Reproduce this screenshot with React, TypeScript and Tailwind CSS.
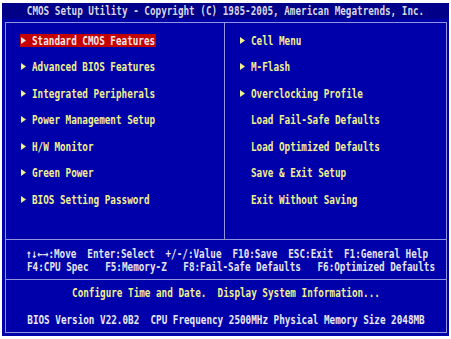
import React from "react";

function Arrow({ light }: { light?: boolean }) {
  return (
    <svg width="5" height="7" viewBox="0 0 5 7" className="block">
      <path d="M0 0L5 3.5L0 7Z" fill={light ? "#f4e8e8" : "#f0f090"} />
    </svg>
  );
}

function Item({ label, arrow, selected }: { label: string; arrow?: boolean; selected?: boolean }) {
  return (
    <div className="h-[26.5px] flex items-center pl-[14px]">
      <div
        className={
          selected
            ? "flex items-center h-[13px] pl-[1px] pr-[1px] bg-[#c40000] text-[#f6e6e6]"
            : "flex items-center h-[13px] pl-[1px] pr-[1px] text-[#f0f090]"
        }
      >
        <span className="w-[11px] flex items-center">{arrow && <Arrow light={selected} />}</span>
        <span className="inline-block scale-y-[1.3] leading-none whitespace-pre">{label}</span>
      </div>
    </div>
  );
}

const left = [
  { label: "Standard CMOS Features", arrow: true, selected: true },
  { label: "Advanced BIOS Features", arrow: true },
  { label: "Integrated Peripherals", arrow: true },
  { label: "Power Management Setup", arrow: true },
  { label: "H/W Monitor", arrow: true },
  { label: "Green Power", arrow: true },
  { label: "BIOS Setting Password", arrow: true },
];

const right = [
  { label: "Cell Menu", arrow: true },
  { label: "M-Flash", arrow: true },
  { label: "Overclocking Profile", arrow: true },
  { label: "Load Fail-Safe Defaults" },
  { label: "Load Optimized Defaults" },
  { label: "Save & Exit Setup" },
  { label: "Exit Without Saving" },
];

const help1 = ["↑↓←→:Move", "Enter:Select", "+/-/:Value", "F10:Save", "ESC:Exit", "F1:General Help"];
const help2 = ["F4:CPU Spec", "F5:Memory-Z", "F8:Fail-Safe Defaults", "F6:Optimized Defaults"];

export default function App() {
  return (
    <div className="w-[451px] h-[339px] bg-white pt-[3px] pl-[2px] pr-[2px] pb-[3px] font-['DejaVu_Sans_Mono',monospace] font-bold text-[9.3px]">
      <div className="h-full flex flex-col bg-[#0000aa]">
        <div className="h-[16px] shrink-0 bg-[#000088] flex items-center justify-center text-[#d8d8e4]">
          <span className="inline-block scale-y-[1.3] leading-none whitespace-pre">
            CMOS Setup Utility - Copyright (C) 1985-2005, American Megatrends, Inc.
          </span>
        </div>
        <div className="flex-1 pt-[3px] pl-[3px] pr-[2px] pb-[3px]">
          <div className="h-full border border-[#9494dc] flex flex-col">
            <div className="h-[217px] shrink-0 border-b border-[#9494dc] flex">
              <div className="w-[219px] shrink-0 border-r border-[#9494dc] pt-[4px]">
                {left.map((it) => (
                  <Item key={it.label} {...it} />
                ))}
              </div>
              <div className="flex-1 pt-[4px]">
                {right.map((it) => (
                  <Item key={it.label} {...it} />
                ))}
              </div>
            </div>
            <div className="h-[40px] shrink-0 border-b border-[#9494dc] pt-[7px] text-[#e4e4ec]">
              <div className="h-[13px] w-[402px] ml-[20px] flex items-center justify-between">
                {help1.map((t) => (
                  <span key={t} className="inline-block scale-y-[1.3] leading-none whitespace-pre">{t}</span>
                ))}
              </div>
              <div className="h-[13px] w-[408px] ml-[21px] flex items-center justify-between">
                {help2.map((t) => (
                  <span key={t} className="inline-block scale-y-[1.3] leading-none whitespace-pre">{t}</span>
                ))}
              </div>
            </div>
            <div className="flex-1 pt-[6px]">
              <div className="h-[13px] flex items-center justify-center text-[#f0f090]">
                <span className="inline-block scale-y-[1.3] leading-none whitespace-pre">
                  Configure Time and Date.  Display System Information...
                </span>
              </div>
              <div className="h-[13px] mt-[14px] flex items-center justify-center text-[#e8e8f0]">
                <span className="inline-block scale-y-[1.3] leading-none whitespace-pre">
                  BIOS Version V22.0B2  CPU Frequency 2500MHz Physical Memory Size 2048MB
                </span>
              </div>
            </div>
          </div>
        </div>
      </div>
    </div>
  );
}
